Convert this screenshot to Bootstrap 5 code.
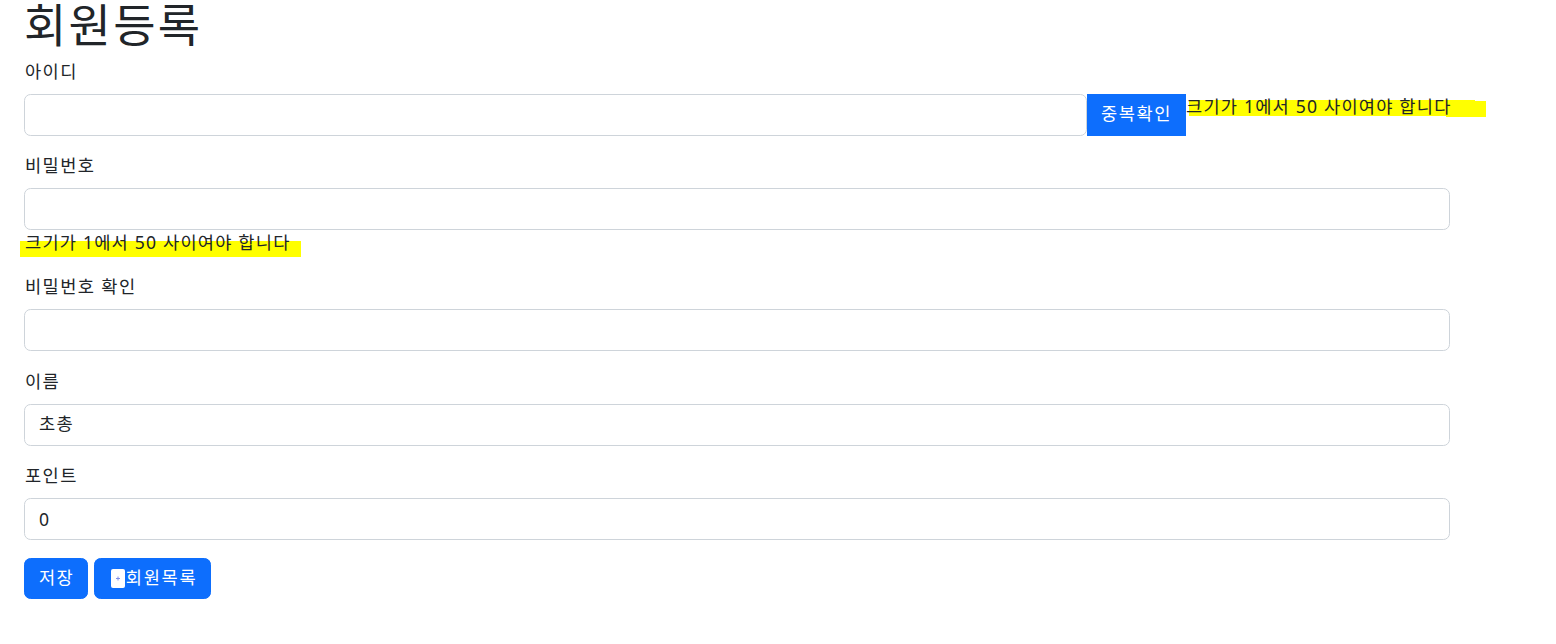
<!DOCTYPE html>
<html lang="ko">
<head>
  <meta charset="UTF-8">
  <title>회원등록</title>
  <link href="https://cdn.jsdelivr.net/npm/bootstrap@5.3.3/dist/css/bootstrap.min.css" rel="stylesheet">
  <style>
    body {
      font-family: "Noto Sans", "Noto Sans CJK KR", sans-serif;
      font-size: 17.6px;
      letter-spacing: .08em;
      color: #212529;
      background: #fff;
    }
    .page-wrap { padding: 0 0 0 24px; width: 1450px; }
    .page-title {
      font-size: 46px;
      line-height: 48px;
      margin: 0 0 9.6px;
      font-weight: 400;
      letter-spacing: .05em;
    }
    .field-label { display: block; line-height: 26.4px; margin-bottom: 10px; padding-left: 1px; }
    .name-label { padding-top: .6px; margin-bottom: 9.4px; }
    .field-box { margin-bottom: 16px; }
    .form-control.field-input {
      height: 42px;
      font-size: 17.6px;
      padding: 6px 14px;
      border-color: #ced4da;
      border-radius: 6.6px;
      letter-spacing: inherit;
    }
    .form-control.name-input { padding-top: 4px; padding-bottom: 8px; }
    .id-row { width: 1462px; }
    .id-row .field-input { width: 1063px; flex: none; }
    .check-btn {
      width: 99px;
      height: 42px;
      flex: none;
      padding: 0 0 4px;
      font-size: 17.6px;
      letter-spacing: .09em;
    }
    .warn-text { position: relative; display: block; letter-spacing: 1.2px; }
    .warn-side { width: 300px; flex: none; line-height: 24px; }
    .warn-below { width: 281px; margin: 0 0 17.6px -4px; padding-left: 5px; line-height: 25px; }
    .warn-text::before, .warn-text::after {
      content: "";
      position: absolute;
      height: 16px;
      background: #ffff00;
      z-index: -1;
    }
    .warn-side::before { left: 3px; width: 286px; top: 6px; }
    .warn-side::after { left: 260px; width: 40px; top: 7px; }
    .warn-below::before { left: 0; right: 0; top: 11px; }
    .warn-below::after { display: none; }
    .last-box { margin-bottom: 17.8px; }
    .btn-line { gap: 6px; }
    .action-btn {
      height: 41px;
      font-size: 17.6px;
      letter-spacing: inherit;
      padding: 0 13px 2px 14px;
      border-radius: 6.6px;
    }
    .list-btn { letter-spacing: .1em; padding-left: 13.5px; padding-right: 12px; }
    .list-icon { width: 14px; height: 19px; flex: none; margin: 2px 1px 0 2px; }
  </style>
</head>
<body>
  <div class="page-wrap">
    <h1 class="page-title">회원등록</h1>
    <form>
      <div class="field-box">
        <label class="field-label">아이디</label>
        <div class="d-flex id-row">
          <input type="text" class="form-control field-input">
          <button type="button" class="btn btn-primary rounded-0 check-btn">중복확인</button>
          <span class="warn-text warn-side">크기가 1에서 50 사이여야 합니다</span>
        </div>
      </div>
      <div>
        <label class="field-label">비밀번호</label>
        <input type="password" class="form-control field-input">
      </div>
      <span class="warn-text warn-below">크기가 1에서 50 사이여야 합니다</span>
      <div class="field-box">
        <label class="field-label">비밀번호 확인</label>
        <input type="password" class="form-control field-input">
      </div>
      <div class="field-box">
        <label class="field-label name-label">이름</label>
        <input type="text" class="form-control field-input name-input" value="초총">
      </div>
      <div class="last-box">
        <label class="field-label">포인트</label>
        <input type="text" class="form-control field-input" value="0">
      </div>
      <div class="d-flex btn-line">
        <button type="button" class="btn btn-primary action-btn">저장</button>
        <button type="button" class="btn btn-primary action-btn list-btn d-flex align-items-center">
          <svg class="list-icon" viewBox="0 0 14 19"><rect width="14" height="19" rx="2" fill="#fff"/><path d="M7 7.5v4M5 9.5h4" stroke="#7f8fe8" stroke-width="1"/></svg>회원목록
        </button>
      </div>
    </form>
  </div>
  <script src="https://cdn.jsdelivr.net/npm/bootstrap@5.3.3/dist/js/bootstrap.bundle.min.js"></script>
</body>
</html>
